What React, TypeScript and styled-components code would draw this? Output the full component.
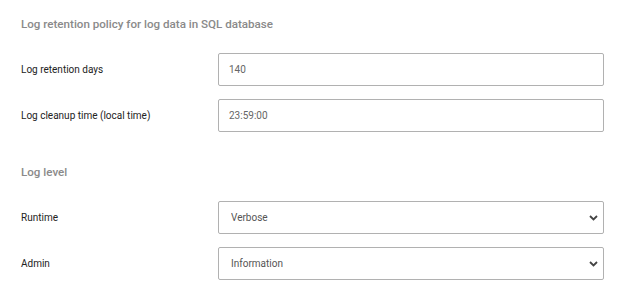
import React, { useState } from 'react';
import styled, { createGlobalStyle } from 'styled-components';

const GlobalStyle = createGlobalStyle`
  html, body {
    margin: 0;
    padding: 0;
    background: #ffffff;
    font-family: Roboto, "Liberation Sans", Arial, sans-serif;
  }
`;

const Page = styled.div`
  width: 632px;
  box-sizing: border-box;
  padding: 17px 28px 0 21px;
  display: flex;
  flex-direction: column;
`;

const Section = styled.section`
  display: flex;
  flex-direction: column;
  gap: 13px;

  & + & {
    margin-top: 33px;
  }
`;

const SectionTitle = styled.h3`
  margin: 0 0 8px 0;
  font-size: 11.6px;
  line-height: 15px;
  font-weight: 500;
  color: #8a8a8a;
`;

const Row = styled.div`
  display: grid;
  grid-template-columns: 197px 1fr;
  align-items: center;
`;

const Label = styled.label`
  font-size: 10px;
  color: #222;
  padding-bottom: 1px;
`;

const TextInput = styled.input`
  box-sizing: border-box;
  width: 100%;
  height: 33px;
  margin: 0;
  padding: 0 10px;
  border: 1px solid #b1b1b1;
  border-radius: 2px;
  font-family: inherit;
  font-size: 10px;
  color: #666;
  outline: none;
`;

const SelectWrap = styled.div`
  position: relative;
  width: 100%;
`;

const Select = styled.select`
  box-sizing: border-box;
  width: 100%;
  height: 33px;
  margin: 0;
  padding: 0 24px 0 12px;
  border: 1px solid #b1b1b1;
  border-radius: 2px;
  background: #fff;
  font-family: inherit;
  font-size: 10px;
  color: #555;
  appearance: none;
  -webkit-appearance: none;
  outline: none;
`;

const Chevron = styled.svg`
  position: absolute;
  right: 6px;
  top: 50%;
  width: 9px;
  height: 6px;
  margin-top: -3px;
  pointer-events: none;
`;

const ChevronDown = () => (
  <Chevron viewBox="0 0 9 6">
    <path d="M1 1 L4.5 4.5 L8 1" fill="none" stroke="#444" strokeWidth="1.8" />
  </Chevron>
);

const levels = ['Verbose', 'Information', 'Warning', 'Error', 'Critical'];

export default function App() {
  const [days, setDays] = useState('140');
  const [cleanup, setCleanup] = useState('23:59:00');
  const [runtime, setRuntime] = useState('Verbose');
  const [admin, setAdmin] = useState('Information');

  return (
    <>
      <GlobalStyle />
      <Page>
        <Section>
          <SectionTitle>Log retention policy for log data in SQL database</SectionTitle>
          <Row>
            <Label>Log retention days</Label>
            <TextInput value={days} onChange={e => setDays(e.target.value)} />
          </Row>
          <Row>
            <Label>Log cleanup time (local time)</Label>
            <TextInput value={cleanup} onChange={e => setCleanup(e.target.value)} />
          </Row>
        </Section>
        <Section>
          <SectionTitle>Log level</SectionTitle>
          <Row>
            <Label>Runtime</Label>
            <SelectWrap>
              <Select value={runtime} onChange={e => setRuntime(e.target.value)}>
                {levels.map(l => <option key={l}>{l}</option>)}
              </Select>
              <ChevronDown />
            </SelectWrap>
          </Row>
          <Row>
            <Label>Admin</Label>
            <SelectWrap>
              <Select value={admin} onChange={e => setAdmin(e.target.value)}>
                {levels.map(l => <option key={l}>{l}</option>)}
              </Select>
              <ChevronDown />
            </SelectWrap>
          </Row>
        </Section>
      </Page>
    </>
  );
}
